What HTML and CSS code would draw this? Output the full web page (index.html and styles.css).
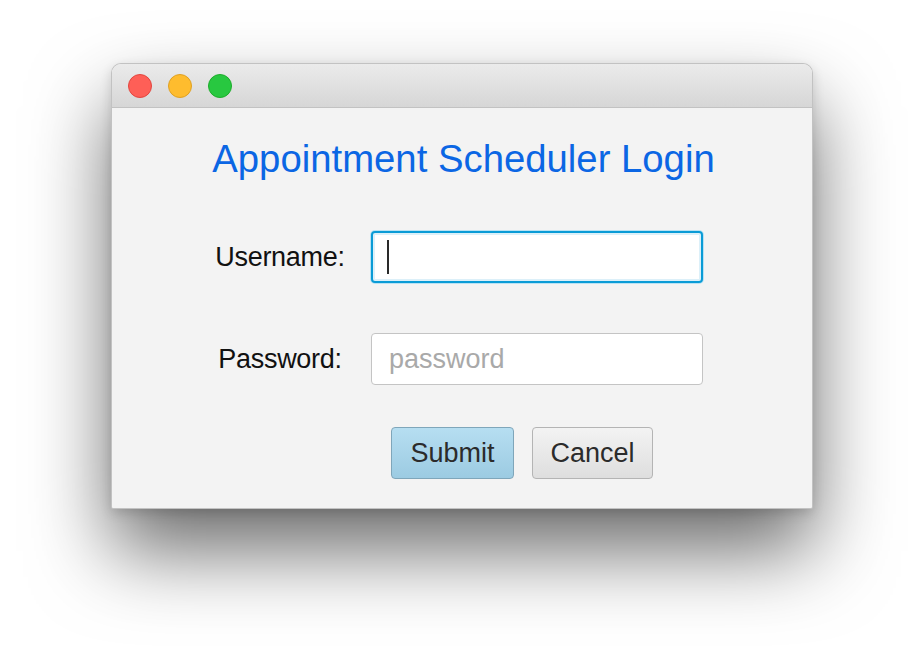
FILE: index.html
```html
<!DOCTYPE html>
<html lang="en">
<head>
<meta charset="utf-8">
<title>Appointment Scheduler Login</title>
<link rel="stylesheet" href="styles.css">
</head>
<body>
<div class="desktop">
  <div class="window">
    <div class="titlebar">
      <span class="light red"></span>
      <span class="light yellow"></span>
      <span class="light green"></span>
    </div>
    <div class="content">
      <h1 class="title">Appointment Scheduler Login</h1>
      <div class="form">
        <label class="label">Username:</label>
        <div class="field focused"><span class="caret"></span></div>
        <label class="label">Password:</label>
        <div class="field"><span class="placeholder">password</span></div>
        <div class="actions">
          <button class="btn btn-default">Submit</button>
          <button class="btn">Cancel</button>
        </div>
      </div>
    </div>
  </div>
</div>
</body>
</html>
```
FILE: styles.css
```css
html, body {
  margin: 0;
  padding: 0;
  background: #ffffff;
  font-family: "Liberation Sans", Arial, sans-serif;
}

.desktop {
  width: 924px;
  height: 668px;
  display: flex;
  justify-content: center;
  align-items: flex-start;
  padding-top: 63px;
  box-sizing: border-box;
  overflow: hidden;
}

.window {
  width: 702px;
  box-sizing: border-box;
  background: #f3f3f3;
  border: 1px solid rgba(0, 0, 0, 0.2);
  border-radius: 10px 10px 2px 2px;
  box-shadow: 0 42px 80px rgba(0, 0, 0, 0.58), 0 4px 12px rgba(0, 0, 0, 0.14);
  overflow: hidden;
}

.titlebar {
  height: 43px;
  display: flex;
  align-items: center;
  gap: 16px;
  padding-left: 16px;
  background: linear-gradient(#ebebeb, #d6d6d6);
  border-bottom: 1px solid #c2c2c2;
}

.light {
  width: 24px;
  height: 24px;
  border-radius: 50%;
  box-sizing: border-box;
}
.red { background: #fe5f57; border: 1px solid #e2463f; }
.yellow { background: #febc2e; border: 1px solid #dfa123; }
.green { background: #28c840; border: 1px solid #1dad2b; }

.content {
  padding: 29px 0 29px;
}

.title {
  margin: 0;
  font-weight: normal;
  font-size: 38.3px;
  line-height: 44px;
  color: #0b66e4;
  text-align: center;
  padding-left: 3px;
}

.form {
  margin-top: 50px;
  margin-left: 93px;
  display: grid;
  grid-template-columns: 150px 332px;
  column-gap: 16px;
  row-gap: 50px;
  align-items: center;
}

.label {
  font-size: 27px;
  letter-spacing: -0.3px;
  color: #111111;
  text-align: center;
}

.field {
  height: 52px;
  box-sizing: border-box;
  background: #ffffff;
  border: 1px solid #c4c4c4;
  border-radius: 4px;
  display: flex;
  align-items: center;
  padding-left: 17px;
}

.field.focused {
  border: 2px solid #0a9bd6;
  box-shadow: 0 0 0 1px #b9e2f3, inset 0 0 0 2px #dcf0f9;
  padding-left: 14px;
}

.caret {
  width: 2px;
  height: 34px;
  background: #2a2a2a;
}

.placeholder {
  font-size: 27px;
  color: #a9a9a9;
}

.actions {
  grid-column: 2;
  margin-top: -8px;
  padding-left: 20px;
  display: flex;
  gap: 18px;
}

.btn {
  height: 52px;
  padding: 0 17.5px;
  font-family: "Liberation Sans", Arial, sans-serif;
  font-size: 27px;
  color: #2b2b2b;
  border: 1px solid #b4b4b4;
  border-radius: 4px;
  background: linear-gradient(#f3f3f3, #dedede);
}

.btn-default {
  padding: 0 18.5px;
  border-color: #7fa6ba;
  background: linear-gradient(#b6def1, #9ccbe2);
}
```
